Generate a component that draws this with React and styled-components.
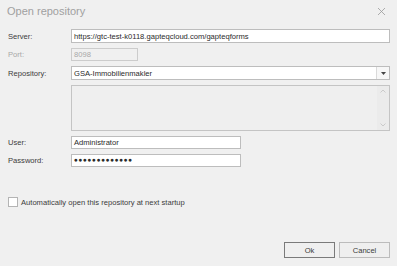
import styled, { createGlobalStyle } from 'styled-components';

const Global = createGlobalStyle`
	html, body {
		margin: 0;
		padding: 0;
		background: #f0f0f0;
	}
	body {
		font-family: "Liberation Sans", Arial, sans-serif;
	}
`;

const Dialog = styled.div`
	width: 397px;
	height: 266px;
	box-sizing: border-box;
	background: #f0f0f0;
	display: flex;
	flex-direction: column;
	padding: 0 7px 8px 8px;
	font-size: 7.6px;
	color: #3c3c3c;
`;

const Header = styled.div`
	display: flex;
	align-items: center;
	justify-content: space-between;
	height: 22px;
	margin-left: -1px;
`;

const Title = styled.div`
	font-size: 11px;
	color: #a0a0a0;
`;

const Close = styled.svg`
	width: 7px;
	height: 7px;
	margin-right: 5px;
`;

const Form = styled.div`
	display: grid;
	grid-template-columns: 63px 1fr;
	grid-template-rows: 14px 13px 14px 46px 13px 13px;
	row-gap: 5px;
	align-items: center;
	margin-top: 7px;
`;

const Label = styled.div`
	color: ${(p) => (p.$disabled ? '#a8a8a8' : '#3c3c3c')};
`;

const Input = styled.div`
	box-sizing: border-box;
	height: 100%;
	width: ${(p) => p.$width || '100%'};
	border: 1px solid ${(p) => (p.$disabled ? '#cccccc' : '#bdbdbd')};
	background: ${(p) => (p.$disabled ? '#f0f0f0' : '#ffffff')};
	color: ${(p) => (p.$disabled ? '#a8a8a8' : '#2a2a2a')};
	display: flex;
	align-items: center;
	padding-left: 2px;
	white-space: nowrap;
	overflow: hidden;
`;

const Combo = styled(Input)`
	padding-right: 0;
`;

const ComboText = styled.span`
	flex: 1;
`;

const DropButton = styled.div`
	width: 12px;
	height: 100%;
	border-left: 1px solid #dadada;
	display: flex;
	align-items: center;
	justify-content: center;
	background: #f7f7f7;
`;

const ListBox = styled.div`
	grid-column: 2;
	height: 46px;
	box-sizing: border-box;
	border: 1px solid #c4c4c4;
	background: #efefef;
	display: flex;
	justify-content: flex-end;
`;

const ScrollBar = styled.div`
	width: 12px;
	background: #ebebeb;
	display: flex;
	flex-direction: column;
	justify-content: space-between;
	align-items: center;
	padding: 3px 0;
`;

const Dots = styled.span`
	letter-spacing: 0.6px;
	font-size: 6.5px;
	line-height: 1;
`;

const CheckRow = styled.label`
	display: flex;
	align-items: center;
	gap: 3px;
	margin-top: 30px;
	color: #3c3c3c;
`;

const Box = styled.span`
	width: 10px;
	height: 10px;
	box-sizing: border-box;
	border: 1px solid #b4b4b4;
	background: #ffffff;
`;

const Footer = styled.div`
	margin-top: auto;
	display: flex;
	justify-content: flex-end;
	gap: 4px;
`;

const Button = styled.div`
	width: 51px;
	height: 16px;
	box-sizing: border-box;
	border: 1px solid ${(p) => (p.$primary ? '#7a7a7a' : '#bcbcbc')};
	background: #efefef;
	display: flex;
	align-items: center;
	justify-content: center;
	color: #3c3c3c;
`;

const Arrow = ({ up }) => (
	<svg width="6" height="4" viewBox="0 0 6 4">
		<path
			d={up ? 'M0.5 3.5 L3 1 L5.5 3.5' : 'M0.5 0.5 L3 3 L5.5 0.5'}
			fill="none"
			stroke="#c6c6c6"
			strokeWidth="0.9"
		/>
	</svg>
);

export default function App() {
	return (
		<>
			<Global />
			<Dialog>
				<Header>
					<Title>Open repository</Title>
					<Close viewBox="0 0 7 7">
						<path d="M0 0 L7 7 M7 0 L0 7" stroke="#9a9a9a" strokeWidth="0.8" />
					</Close>
				</Header>
				<Form>
					<Label>Server:</Label>
					<Input>https://gtc-test-k0118.gapteqcloud.com/gapteqforms</Input>
					<Label $disabled>Port:</Label>
					<Input $disabled $width="67px">8098</Input>
					<Label>Repository:</Label>
					<Combo>
						<ComboText>GSA-Immobilienmakler</ComboText>
						<DropButton>
							<svg width="5" height="3" viewBox="0 0 5 3">
								<path d="M0 0 H5 L2.5 3 Z" fill="#444" />
							</svg>
						</DropButton>
					</Combo>
					<ListBox>
						<ScrollBar>
							<Arrow up />
							<Arrow />
						</ScrollBar>
					</ListBox>
					<Label>User:</Label>
					<Input $width="170px">Administrator</Input>
					<Label>Password:</Label>
					<Input $width="170px">
						<Dots>●●●●●●●●●●●●●</Dots>
					</Input>
				</Form>
				<CheckRow>
					<Box />
					Automatically open this repository at next startup
				</CheckRow>
				<Footer>
					<Button $primary>Ok</Button>
					<Button>Cancel</Button>
				</Footer>
			</Dialog>
		</>
	);
}
